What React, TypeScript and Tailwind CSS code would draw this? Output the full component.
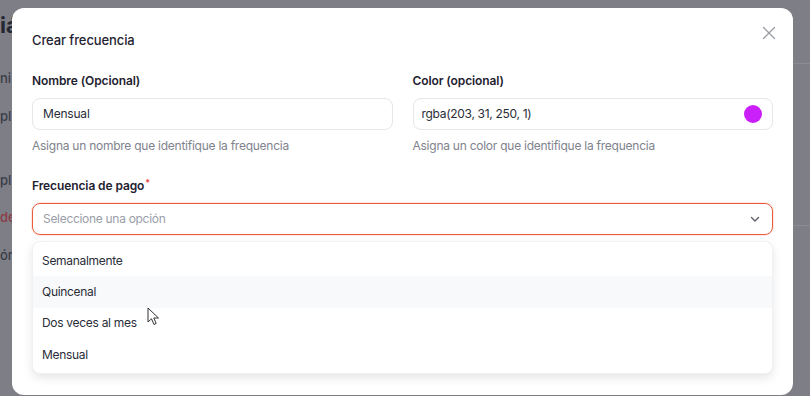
import React from "react";

const font = { fontFamily: "Inter, 'Noto Sans', sans-serif" };

export default function App() {
  const options = ["Semanalmente", "Quincenal", "Dos veces al mes", "Mensual"];
  return (
    <div className="relative w-[810px] h-[396px] overflow-hidden bg-[#7e7f86]" style={font}>
      {/* background page (dimmed) */}
      <div className="flex flex-col pt-[12px] text-[#3a3c4a]">
        <div className="text-[22px] font-bold leading-[26px] text-[#252733]">iá</div>
        <div className="mt-[32px] text-[13px] font-medium leading-[16px]">ni</div>
        <div className="mt-[22px] text-[13px] font-medium leading-[16px]">pl</div>
        <div className="mt-[48px] text-[13px] font-medium leading-[16px]">pl</div>
        <div className="mt-[21px] text-[13px] font-medium leading-[16px] text-[#8c3b46]">de</div>
        <div className="mt-[22px] text-[13px] font-medium leading-[16px]">ón</div>
      </div>
      <div className="absolute left-[793px] right-0 top-[63px] h-px bg-[#8b8c93]" />
      <div className="absolute left-[793px] right-0 top-[225px] h-px bg-[#8b8c93]" />

      {/* modal */}
      <div className="absolute left-[12px] top-[8px] w-[781px] h-[387px] bg-white rounded-[12px] px-[20px] pt-[21px]">
        <div className="flex items-center justify-between h-[24px]">
          <div className="text-[13px] font-medium text-[#1f2230] tracking-[-0.1px]">Crear frecuencia</div>
          <svg width="14" height="14" viewBox="0 0 14 14" className="mr-[-3px] mt-[-16px]">
            <path d="M1.5 1.5 L12.5 12.5 M12.5 1.5 L1.5 12.5" stroke="#9a9ca3" strokeWidth="1.3" strokeLinecap="round" />
          </svg>
        </div>

        <div className="grid grid-cols-2 gap-x-[20px] mt-[20px]">
          <div className="flex flex-col">
            <label className="text-[12px] font-semibold text-[#1f2230] leading-[16px] tracking-[-0.1px]">Nombre (Opcional)</label>
            <div className="mt-[9px] h-[32px] rounded-[8px] border border-[#e4e6ea] flex items-center px-[10px] text-[12px] tracking-[-0.2px] text-[#2a2d38]">
              Mensual
            </div>
            <div className="mt-[8px] text-[12px] tracking-[-0.25px] text-[#80838d] leading-[16px]">Asigna un nombre que identifique la frequencia</div>
          </div>
          <div className="flex flex-col">
            <label className="text-[12px] font-semibold text-[#1f2230] leading-[16px] tracking-[-0.1px]">Color (opcional)</label>
            <div className="mt-[9px] h-[32px] rounded-[8px] border border-[#e4e6ea] flex items-center justify-between pl-[8px] pr-[10px] text-[12px] tracking-[-0.3px] text-[#2a2d38]">
              <span>rgba(203, 31, 250, 1)</span>
              <span className="w-[18px] h-[18px] rounded-full bg-[rgb(203,31,250)]" />
            </div>
            <div className="mt-[8px] text-[12px] tracking-[-0.25px] text-[#80838d] leading-[16px]">Asigna un color que identifique la frequencia</div>
          </div>
        </div>

        <div className="mt-[24px] flex flex-col relative">
          <label className="text-[12px] font-semibold text-[#1f2230] leading-[16px] tracking-[-0.1px]">
            Frecuencia de pago<sup className="text-[#ef4444] text-[9px] ml-[1px]">*</sup>
          </label>
          <div className="mt-[9px] h-[32px] rounded-[8px] border-[1.5px] border-[#ec5b3c] shadow-[0_0_0_1px_rgba(236,91,60,0.15)] flex items-center justify-between px-[10px] text-[12px] tracking-[-0.3px] text-[#9a9ea8]">
            <span>Seleccione una opción</span>
            <svg width="12" height="12" viewBox="0 0 12 12" className="mr-[1px]">
              <path d="M2.5 4.5 L6 8 L9.5 4.5" fill="none" stroke="#5b5e68" strokeWidth="1.4" strokeLinecap="round" strokeLinejoin="round" />
            </svg>
          </div>

          {/* dropdown */}
          <div className="absolute left-0 right-0 top-[63px] bg-white rounded-[8px] border border-[#f0f1f3] shadow-[0_4px_10px_rgba(0,0,0,0.10)] py-[3px] flex flex-col">
            {options.map((o) => (
              <div
                key={o}
                className={`h-[31.3px] flex items-center px-[9px] text-[12px] tracking-[-0.3px] text-[#2a2d38] ${o === "Quincenal" ? "bg-[#f8f9fb]" : ""}`}
              >
                {o}
              </div>
            ))}
          </div>
        </div>
      </div>

      {/* cursor */}
      <svg className="absolute left-[147px] top-[307px]" width="14" height="20" viewBox="0 0 14 20">
        <path d="M1 1 L1 15 L4.5 11.8 L7 17.5 L9.2 16.5 L6.8 11 L11.5 11 Z" fill="white" stroke="#333" strokeWidth="1" strokeLinejoin="round" />
      </svg>
    </div>
  );
}
